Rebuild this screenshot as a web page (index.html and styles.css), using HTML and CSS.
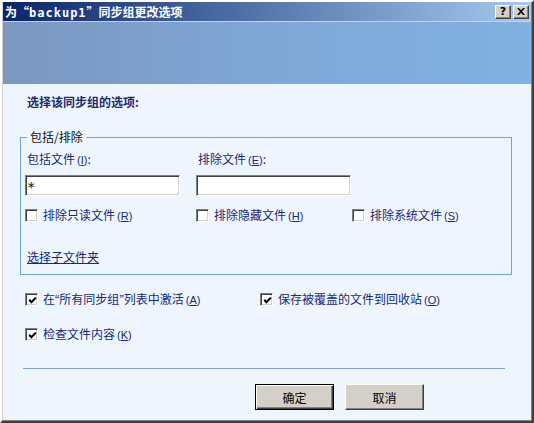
FILE: index.html
```html
<!DOCTYPE html>
<html lang="zh-CN">
  <head>
    <meta charset="UTF-8" />
    <title>为“backup1”同步组更改选项</title>
    <link rel="stylesheet" href="styles.css">
  </head>
  <body>
    <div class="window">
      <div class="titlebar">
        <span class="title">为“<span class="mono">backup1</span>”同步组更改选项</span>
        <div class="caption-btns">
          <span class="cap cap-help">?</span>
          <span class="cap">
            <svg width="8" height="7" viewBox="0 0 8 7"><path d="M0 0h2l2 2.2 2-2.2h2l-3 3.5 3 3.5h-2l-2-2.2-2 2.2h-2l3-3.5z" fill="#000"/></svg>
          </span>
        </div>
      </div>
      <div class="banner"></div>

      <div class="client">
        <h2 class="heading">选择该同步组的选项:</h2>

        <fieldset class="group">
          <legend>包括/排除</legend>
          <div class="fields">
            <label class="field">
              <span class="field-label">包括文件<span class="key">(<u>I</u>)</span>:</span>
              <input class="textbox" type="text" value="*">
            </label>
            <label class="field">
              <span class="field-label">排除文件<span class="key">(<u>E</u>)</span>:</span>
              <input class="textbox" type="text" value="">
            </label>
          </div>
          <div class="checks">
            <label class="check"><span class="box"></span><span>排除只读文件<span class="key">(<u>R</u>)</span></span></label>
            <label class="check"><span class="box"></span><span>排除隐藏文件<span class="key">(<u>H</u>)</span></span></label>
            <label class="check"><span class="box"></span><span>排除系统文件<span class="key">(<u>S</u>)</span></span></label>
          </div>
          <a class="link" href="#">选择子文件夹</a>
        </fieldset>

        <div class="options">
          <label class="check"><span class="box checked"><svg width="9" height="9" viewBox="0 0 9 9"><polyline points="1.2,3.8 3.4,6.2 7.8,1.6" fill="none" stroke="#000" stroke-width="2"/></svg></span><span>在<span class="q">“</span>所有同步组<span class="q">”</span>列表中激活<span class="key">(<u>A</u>)</span></span></label>
          <label class="check"><span class="box checked"><svg width="9" height="9" viewBox="0 0 9 9"><polyline points="1.2,3.8 3.4,6.2 7.8,1.6" fill="none" stroke="#000" stroke-width="2"/></svg></span><span>保存被覆盖的文件到回收站<span class="key">(<u>O</u>)</span></span></label>
          <label class="check"><span class="box checked"><svg width="9" height="9" viewBox="0 0 9 9"><polyline points="1.2,3.8 3.4,6.2 7.8,1.6" fill="none" stroke="#000" stroke-width="2"/></svg></span><span>检查文件内容<span class="key">(<u>K</u>)</span></span></label>
        </div>

        <div class="separator"></div>

        <div class="actions">
          <button class="btn btn-default">确定</button>
          <button class="btn">取消</button>
        </div>
      </div>
    </div>
  </body>
</html>
```

FILE: styles.css
```css
body {
  margin: 0;
  background: #d4d0c8;
  font-family: "Noto Sans CJK SC", "DejaVu Sans", sans-serif;
  font-size: 12px;
  line-height: 14px;
}

.window {
  width: 534px;
  height: 423px;
  box-sizing: border-box;
  background: #d4d0c8;
  border-style: solid;
  border-width: 2px;
  border-color: #ffffff #404040 #404040 #ffffff;
  box-shadow: inset -1px -1px 0 #808080;
  padding: 0 1px 1px 1px;
}

/* title bar */
.titlebar {
  height: 19px;
  display: flex;
  align-items: center;
  justify-content: space-between;
  padding: 0 2px;
  background: linear-gradient(90deg, #0a246a, #a6caf0);
}

.title {
  color: #fff;
  font-weight: bold;
  font-size: 12px;
  padding-top: 2px;
}

.mono {
  font-family: "DejaVu Sans Mono", monospace;
  letter-spacing: 1px;
}

.caption-btns {
  display: flex;
  gap: 2px;
}

.cap {
  width: 16px;
  height: 14px;
  box-sizing: border-box;
  background: #d4d0c8;
  border: 1px solid;
  border-color: #ffffff #404040 #404040 #ffffff;
  box-shadow: inset -1px -1px 0 #808080;
  display: flex;
  align-items: center;
  justify-content: center;
}

.cap-help {
  font-family: "DejaVu Sans", sans-serif;
  font-weight: bold;
  font-size: 11px;
  line-height: 12px;
}

.banner {
  height: 62px;
  margin-top: 1px;
  background: linear-gradient(90deg, #7b97c1, #7fa7d6 50%, #7fb1e1);
}

/* client area */
.client {
  height: 336px;
  box-sizing: border-box;
  background: #eef5fc;
  padding: 11px 19px 0 17px;
  color: #15287a;
}

.heading {
  margin: 0 0 0 7px;
  font-size: 12px;
  line-height: 14px;
  font-weight: bold;
  color: #1c2a6c;
}

/* accelerator key, e.g. (R) */
.key {
  font-family: "Liberation Sans", "DejaVu Sans", sans-serif;
  font-size: 11px;
  margin-left: 2px;
}

.q {
  font-family: "Liberation Sans", sans-serif;
  font-size: 13px;
}

.group {
  margin: 21px 0 0;
  padding: 8px 4px 10px 4px;
  border: 1px solid #6aa6e0;
  min-width: 0;
}

.group legend {
  margin-left: 2px;
  padding: 0 3px;
  color: #111;
}

.fields {
  display: grid;
  grid-template-columns: 171px 156px;
}

.field {
  display: flex;
  flex-direction: column;
  gap: 8px;
}

.field-label {
  margin-left: 2px;
}

.textbox {
  width: 155px;
  height: 21px;
  box-sizing: border-box;
  margin: 0;
  padding: 2px 1px 0;
  background: #fff;
  border: 1px solid;
  border-color: #808080 #ffffff #ffffff #808080;
  box-shadow: inset 1px 1px 0 #404040, inset -1px -1px 0 #d4d0c8;
  font-family: "DejaVu Sans Mono", monospace;
  font-size: 14px;
  color: #000;
  outline: none;
}

.checks {
  display: grid;
  grid-template-columns: 171px 156px auto;
  margin-top: 12px;
}

.check {
  display: flex;
  align-items: center;
  gap: 5px;
  white-space: nowrap;
}

.box {
  width: 13px;
  height: 13px;
  box-sizing: border-box;
  flex: none;
  background: #fff;
  border: 1px solid;
  border-color: #808080 #ffffff #ffffff #808080;
  box-shadow: inset 1px 1px 0 #404040, inset -1px -1px 0 #d4d0c8;
  display: flex;
  align-items: center;
  justify-content: center;
}

.box svg {
  margin: 1px 0 0 1px;
}

.link {
  display: inline-block;
  margin: 27px 0 0 2px;
  color: #15287a;
  text-decoration: underline;
}

.options {
  display: grid;
  grid-template-columns: 235px auto;
  row-gap: 20px;
  margin: 17px 0 0 5px;
}

.separator {
  height: 1px;
  width: 482px;
  margin: 26px 0 0 3px;
  background: #7f9fcf;
}

.actions {
  display: flex;
  gap: 11px;
  margin: 15px 0 0 235px;
}

.btn {
  width: 79px;
  height: 26px;
  box-sizing: border-box;
  margin: 0;
  padding: 0;
  background: #d4d0c8;
  border: 1px solid;
  border-color: #ffffff #404040 #404040 #ffffff;
  box-shadow: inset -1px -1px 0 #808080;
  font-family: "Noto Sans CJK SC", "DejaVu Sans", sans-serif;
  font-size: 12px;
  color: #000;
}

.btn-default {
  border-color: #000;
  box-shadow: inset 1px 1px 0 #ffffff, inset -1px -1px 0 #404040, inset -2px -2px 0 #808080;
}
```
